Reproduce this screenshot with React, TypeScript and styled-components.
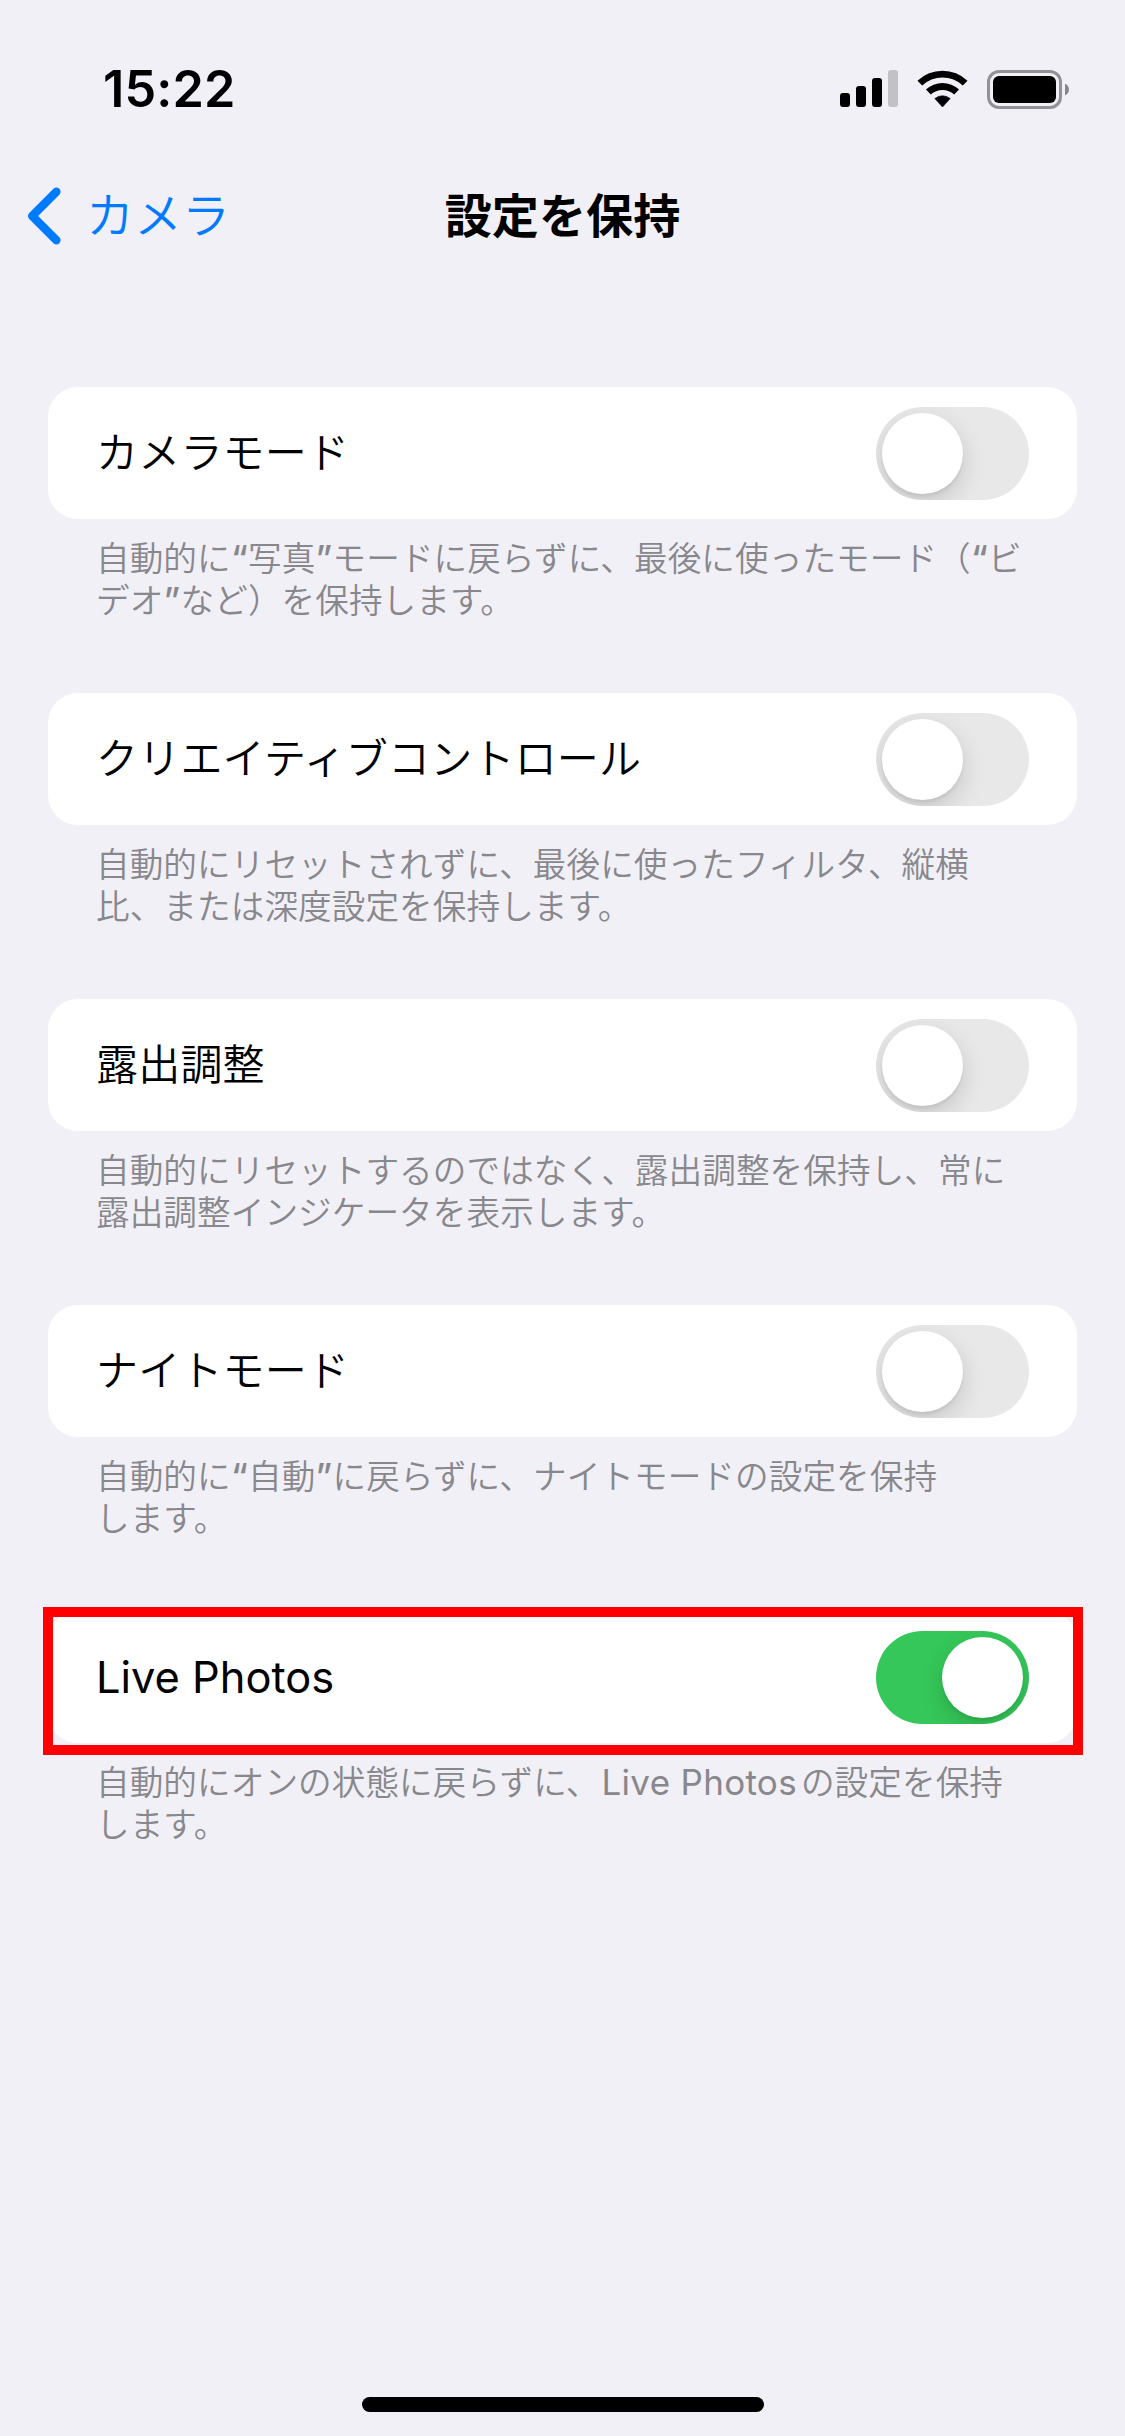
import React, { useState } from "react";
import styled, { createGlobalStyle } from "styled-components";

const GlobalStyle = createGlobalStyle`
  * { box-sizing: border-box; }
  html, body { margin: 0; padding: 0; background: #f1f0f6; }
  body {
    font-family: Inter, "Noto Sans CJK JP", sans-serif;
    color: #000;
  }
`;

const Screen = styled.div`
  width: 1125px;
  height: 2436px;
  display: flex;
  flex-direction: column;
  background: #f1f0f6;
  overflow: hidden;
`;

const StatusBar = styled.header`
  height: 132px;
  padding: 59px 56px 0 103px;
  display: flex;
  justify-content: space-between;
  align-items: flex-start;
`;

const Clock = styled.time`
  font-size: 50.4px;
  font-weight: 600;
  line-height: 60px;
  letter-spacing: 0.15px;
`;

const StatusIcons = styled.div`
  display: flex;
  padding-top: 11px;
`;

const SignalIcon = styled.svg`
  width: 58px;
  height: 37px;
  margin-right: 19px;
`;

const WifiIcon = styled.svg`
  width: 51px;
  height: 38px;
  margin-right: 19px;
`;

const BatteryIcon = styled.svg`
  width: 82px;
  height: 39px;
`;

const NavBar = styled.nav`
  height: 168px;
  padding: 0 27px;
  display: grid;
  grid-template-columns: 1fr auto 1fr;
  align-items: center;
`;

const BackButton = styled.button`
  display: flex;
  align-items: center;
  gap: 25px;
  padding: 0;
  border: 0;
  background: none;
  color: #007aff;
  font: inherit;
  font-size: 48px;
  font-weight: 350;
  line-height: 60px;
`;

const Chevron = styled.svg`
  width: 34px;
  height: 58px;
`;

const Title = styled.h1`
  margin: 0;
  font-size: 47.1px;
  font-weight: 700;
  line-height: 60px;
`;

const Groups = styled.main`
  flex: 1;
  padding: 87px 48px 0;
  display: flex;
  flex-direction: column;
  gap: 71px;
`;

const Group = styled.section`
  position: relative;
`;

const Row = styled.div`
  height: 132px;
  padding: 1px 48px 0;
  display: flex;
  align-items: center;
  justify-content: space-between;
  background: #fff;
  border-radius: 30px;
`;

const Label = styled.span<{ $latin?: boolean }>`
  margin-bottom: 2px;
  font-size: ${(p) => (p.$latin ? 43.4 : 42)}px;
  font-weight: ${(p) => (p.$latin ? 400 : 350)};
  letter-spacing: ${(p) => (p.$latin ? 0 : 0.2)}px;
  line-height: 60px;
`;

const Track = styled.button<{ $on: boolean }>`
  width: 153px;
  height: 93px;
  padding: 6px;
  border: 0;
  border-radius: 47px;
  display: flex;
  justify-content: ${(p) => (p.$on ? "flex-end" : "flex-start")};
  background: ${(p) => (p.$on ? "#35c759" : "#e8e8e8")};
  overflow: hidden;
`;

const Knob = styled.span`
  width: 81px;
  height: 81px;
  border-radius: 50%;
  background: #fff;
  box-shadow: 0 9px 24px rgba(0, 0, 0, 0.15), 0 3px 3px rgba(0, 0, 0, 0.06);
`;

const Note = styled.p`
  margin: 0;
  padding: 19px 0 0 48px;
  color: #88878c;
  font-size: 33.6px;
  font-weight: 350;
  letter-spacing: 0.1px;
  line-height: 42px;
  white-space: nowrap;
`;

const NoteLine = styled.span`
  display: block;
  height: 42px;
`;

const Latin = styled.span`
  font-size: 35px;
  font-weight: 400;
  letter-spacing: 0.3px;
  line-height: 1;
  margin: 0 4px 0 2px;
`;

const Quote = styled.span`
  font-size: 35.5px;
  font-weight: 450;
  line-height: 1;
  margin: 0 0.2px;
`;

const Highlight = styled.div`
  position: absolute;
  top: -4px;
  left: -5px;
  width: 1040px;
  height: 148px;
  border: 10px solid #f00;
  pointer-events: none;
`;

const HomeArea = styled.footer`
  height: 39px;
  display: flex;
  justify-content: center;
`;

const HomeIndicator = styled.div`
  width: 402px;
  height: 15px;
  border-radius: 8px;
  background: #000;
`;

type Setting = {
  label: string;
  note: string[];
  on?: boolean;
  latin?: boolean;
  highlighted?: boolean;
};

const settings: Setting[] = [
  {
    label: "カメラモード",
    note: ["自動的に“写真”モードに戻らずに、最後に使ったモード（“ビ", "デオ”など）を保持します。"],
  },
  {
    label: "クリエイティブコントロール",
    note: ["自動的にリセットされずに、最後に使ったフィルタ、縦横", "比、または深度設定を保持します。"],
  },
  {
    label: "露出調整",
    note: ["自動的にリセットするのではなく、露出調整を保持し、常に", "露出調整インジケータを表示します。"],
  },
  {
    label: "ナイトモード",
    note: ["自動的に“自動”に戻らずに、ナイトモードの設定を保持", "します。"],
  },
  {
    label: "Live Photos",
    latin: true,
    on: true,
    highlighted: true,
    note: ["自動的にオンの状態に戻らずに、Live Photosの設定を保持", "します。"],
  },
];

/* Latin words and quotation marks are set slightly larger than the kana around them. */
function renderRuns(line: string) {
  return line.split(/([“”]|[A-Za-z][A-Za-z ]*)/).map((run, i) => {
    if (/^[“”]$/.test(run)) return <Quote key={i}>{run}</Quote>;
    if (/^[A-Za-z]/.test(run)) return <Latin key={i}>{run}</Latin>;
    return run;
  });
}

function SettingGroup({ setting }: { setting: Setting }) {
  const [on, setOn] = useState(!!setting.on);
  return (
    <Group>
      <Row>
        <Label $latin={setting.latin}>{setting.label}</Label>
        <Track $on={on} role="switch" aria-checked={on} onClick={() => setOn(!on)}>
          <Knob />
        </Track>
      </Row>
      <Note>
        {setting.note.map((line, i) => (
          <NoteLine key={i}>{renderRuns(line)}</NoteLine>
        ))}
      </Note>
      {setting.highlighted && <Highlight />}
    </Group>
  );
}

export default function App() {
  return (
    <Screen lang="ja">
      <GlobalStyle />
      <StatusBar>
        <Clock>15:22</Clock>
        <StatusIcons>
          <SignalIcon viewBox="0 0 58 37">
            <rect x="0" y="23" width="10" height="14" rx="3" />
            <rect x="16" y="16" width="10" height="21" rx="3" />
            <rect x="32" y="8" width="10" height="29" rx="3" />
            <rect x="48" y="0" width="10" height="37" rx="3" fill="#c2c1c6" />
          </SignalIcon>
          <WifiIcon viewBox="0 0 51 38">
            <path d="M0.5 10.8 A36 36 0 0 1 50.5 10.8 L45.8 15.6 A29.5 29.5 0 0 0 5.2 15.6 Z" />
            <path d="M9 19.6 A24 24 0 0 1 42 19.6 L37.2 24.4 A17.4 17.4 0 0 0 13.8 24.4 Z" />
            <path d="M17.8 28.6 A11.8 11.8 0 0 1 33.2 28.6 L25.5 37 Z" stroke="#000" strokeWidth="0.6" strokeLinejoin="round" />
          </WifiIcon>
          <BatteryIcon viewBox="0 0 82 39">
            <rect x="1.5" y="1.5" width="72" height="36" rx="10.5" fill="none" stroke="#929196" strokeWidth="3" />
            <rect x="6" y="6" width="63" height="27" rx="6" />
            <path d="M78 13.8 C83.3 15.4 83.3 23.6 78 25.2 Z" fill="#858489" />
          </BatteryIcon>
        </StatusIcons>
      </StatusBar>
      <NavBar>
        <BackButton>
          <Chevron viewBox="0 0 34 58" fill="none" stroke="#007aff" strokeWidth="8.4" strokeLinecap="round" strokeLinejoin="round">
            <path d="M29.4 4.8 L5.2 29 L29.4 53.2" />
          </Chevron>
          カメラ
        </BackButton>
        <Title>設定を保持</Title>
      </NavBar>
      <Groups>
        {settings.map((s) => (
          <SettingGroup key={s.label} setting={s} />
        ))}
      </Groups>
      <HomeArea>
        <HomeIndicator />
      </HomeArea>
    </Screen>
  );
}
